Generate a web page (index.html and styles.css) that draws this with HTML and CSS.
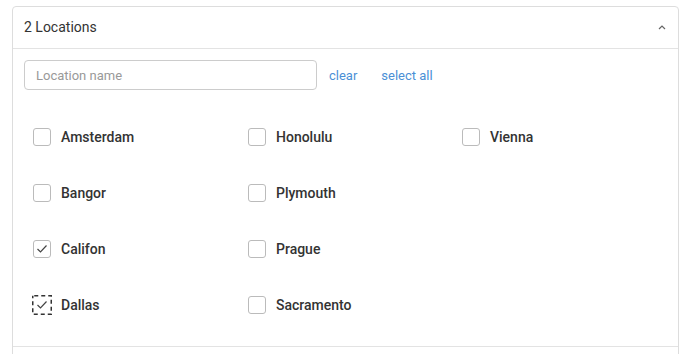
FILE: index.html
```html
<!DOCTYPE html>
<html lang="en">
<head>
    <meta charset="UTF-8">
    <meta name="viewport" content="width=device-width, initial-scale=1.0">
    <title>Locations</title>
    <link rel="stylesheet" href="styles.css">
</head>
<body>

<div class="panel">
    <div class="panel-header">
        <div class="panel-title">2 Locations</div>
        <svg class="chevron" width="8" height="5" viewBox="0 0 8 5">
            <polyline points="1,4 4,1 7,4" fill="none" stroke="#666" stroke-width="1.2"/>
        </svg>
    </div>

    <div class="panel-body">
        <div class="search-row">
            <input class="search-input" type="text" placeholder="Location name">
            <a class="link" href="#clear">clear</a>
            <a class="link" href="#select-all">select all</a>
        </div>

        <div class="location-grid">
            <label class="location"><span class="box"></span>Amsterdam</label>
            <label class="location"><span class="box"></span>Honolulu</label>
            <label class="location"><span class="box"></span>Vienna</label>

            <label class="location"><span class="box"></span>Bangor</label>
            <label class="location"><span class="box"></span>Plymouth</label>
            <div></div>

            <label class="location"><span class="box checked"><svg width="12" height="10" viewBox="0 0 12 10"><polyline points="1.5,5 4.5,8 10.5,1.5" fill="none" stroke="#444" stroke-width="1.2"/></svg></span>Califon</label>
            <label class="location"><span class="box"></span>Prague</label>
            <div></div>

            <label class="location">
                <span class="box focused">
                    <svg class="focus-ring" width="20" height="20" viewBox="0 0 20 20"><rect x="0.75" y="0.75" width="18.5" height="18.5" fill="none" stroke="#333" stroke-width="1.5" stroke-dasharray="4 3" stroke-dashoffset="-1.5"/></svg>
                    <svg width="12" height="10" viewBox="0 0 12 10"><polyline points="1.5,5 4.5,8 10.5,1.5" fill="none" stroke="#444" stroke-width="1.2"/></svg>
                </span>Dallas
            </label>
            <label class="location"><span class="box"></span>Sacramento</label>
            <div></div>
        </div>
    </div>

    <div class="panel-footer"></div>
</div>

</body>
</html>
```

FILE: styles.css
```css
body {
    font-family: Roboto, 'Liberation Sans', sans-serif;
    margin: 0;
    padding: 6px 9px 0 12px;
    background-color: #ffffff;
    color: #333333;
    overflow: hidden;
}

.panel {
    border: 1px solid #dddddd;
    border-radius: 4px 4px 0 0;
    background-color: #ffffff;
}

.panel-header {
    height: 42px;
    display: flex;
    align-items: center;
    padding: 0 11px 1px 11px;
    box-sizing: border-box;
    border-bottom: 1px solid #e3e3e3;
}

.panel-title {
    font-size: 14px;
    margin-right: auto;
    color: #333333;
}

.chevron {
    margin-right: 1px;
    margin-top: 1px;
}

.panel-body {
    padding: 11px 11px 13px 11px;
}

.search-row {
    display: flex;
    align-items: center;
}

.search-input {
    width: 293px;
    height: 30px;
    box-sizing: border-box;
    border: 1px solid #cccccc;
    border-radius: 4px;
    padding: 0 11px;
    font-family: Roboto, 'Liberation Sans', sans-serif;
    font-size: 13px;
    color: #333333;
    outline: none;
}

.search-input::placeholder {
    color: #999999;
}

.link {
    font-size: 13px;
    color: #4a8fd6;
    text-decoration: none;
    margin-left: 12px;
    margin-right: 12px;
}

.location-grid {
    display: grid;
    grid-template-columns: 215px 214px 214px;
    grid-auto-rows: 56px;
    margin-top: 19px;
}

.location {
    display: flex;
    align-items: center;
    padding-left: 9px;
    font-size: 14px;
    font-weight: 500;
    color: #333333;
}

.box {
    position: relative;
    width: 18px;
    height: 18px;
    box-sizing: border-box;
    border: 1px solid #bbbbbb;
    border-radius: 3px;
    margin-right: 10px;
    display: flex;
    align-items: center;
    justify-content: center;
    flex-shrink: 0;
}

.box.focused {
    border-color: transparent;
}

.focus-ring {
    position: absolute;
    left: -2px;
    top: -2px;
}

.panel-footer {
    border-top: 1px solid #e3e3e3;
    height: 20px;
}
```
